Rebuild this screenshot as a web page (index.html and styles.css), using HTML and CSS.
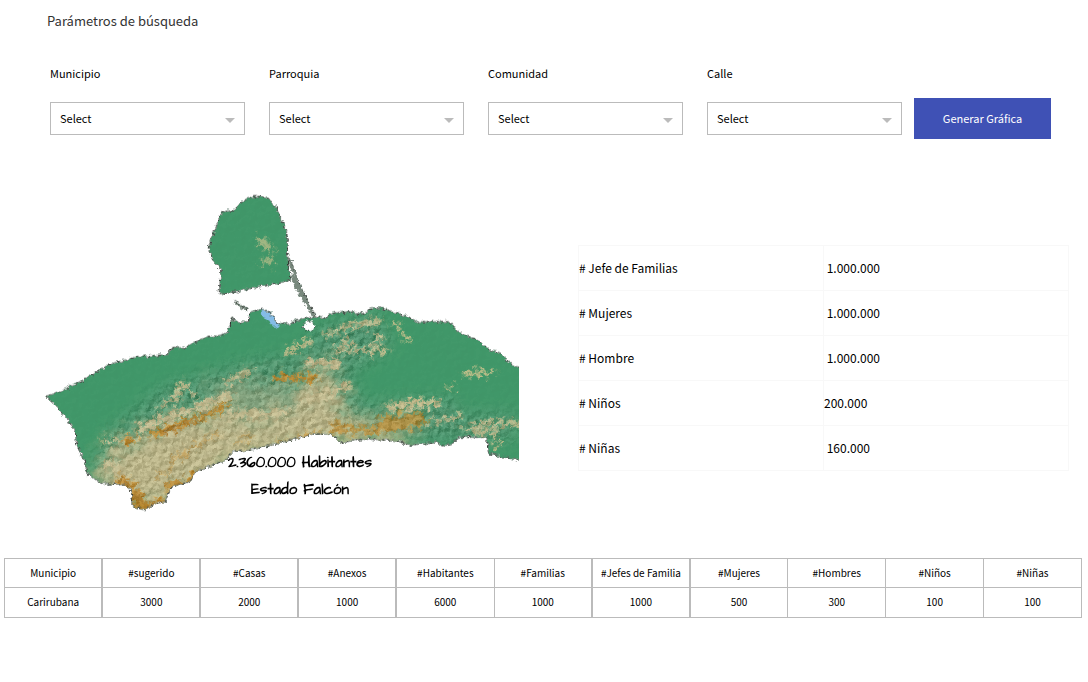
FILE: index.html
```html
<!DOCTYPE html>
<html lang="es">
<head>
<meta charset="utf-8">
<meta name="viewport" content="width=device-width, initial-scale=1">
<title>Parámetros de búsqueda</title>
<link rel="stylesheet" href="styles.css">
</head>
<body>
<main class="page">
  <h1 class="title">Parámetros de búsqueda</h1>

  <form class="filters">
    <div class="field">
      <label for="municipio">Municipio</label>
      <div class="select-box">
        <select id="municipio"><option>Select</option></select>
        <svg class="caret" viewBox="0 0 10 5" aria-hidden="true"><path d="M0 0h10L5 5z"/></svg>
      </div>
    </div>
    <div class="field">
      <label for="parroquia">Parroquia</label>
      <div class="select-box">
        <select id="parroquia"><option>Select</option></select>
        <svg class="caret" viewBox="0 0 10 5" aria-hidden="true"><path d="M0 0h10L5 5z"/></svg>
      </div>
    </div>
    <div class="field">
      <label for="comunidad">Comunidad</label>
      <div class="select-box">
        <select id="comunidad"><option>Select</option></select>
        <svg class="caret" viewBox="0 0 10 5" aria-hidden="true"><path d="M0 0h10L5 5z"/></svg>
      </div>
    </div>
    <div class="field">
      <label for="calle">Calle</label>
      <div class="select-box">
        <select id="calle"><option>Select</option></select>
        <svg class="caret" viewBox="0 0 10 5" aria-hidden="true"><path d="M0 0h10L5 5z"/></svg>
      </div>
    </div>
    <button class="submit" type="button">Generar Gráfica</button>
  </form>

  <section class="overview">
    <figure class="map">
      <svg class="map-drawing" viewBox="42 42 1425 954" role="img" aria-label="Mapa del Estado Falcón">
        <defs>
          <path id="mainland" d="M48 650L100 630 160 600 205 572 250 550 320 530 410 525 425 503 460 503 490 490 530 470 560 468 585 462 600 440 605 412 625 428 655 425 660 395 700 388 725 402 740 428 770 434 800 422 830 415 855 410 890 415 900 400 960 395 1000 402 1020 388 1042 382 1080 392 1130 408 1160 425 1255 425 1275 445 1300 465 1350 482 1380 512 1410 518 1440 550 1467 562 1500 562V845L1440 835 1375 820 1370 772 1290 772 1260 795 1235 797 1225 788 1140 795 1090 780 1000 778 930 788 905 763 850 762 800 775 720 797 640 815 610 812 585 842 500 875 480 905 425 920 405 965 375 970 345 990 310 980 305 945 300 925 285 915 215 910 175 885 165 850 140 795 135 750 105 710 70 670Z"/>
          <path id="peninsula" d="M575 95L610 92 640 62 675 47 715 55 738 80 750 110 770 150 773 220 780 300 740 312 700 318 640 330 590 343 567 340 570 310 573 270 565 260 545 235 535 205 550 160 565 125Z"/>
          <clipPath id="land"><use href="#mainland"/><use href="#peninsula"/></clipPath>
          <filter id="coast" x="-2%" y="-2%" width="104%" height="104%">
            <feTurbulence type="fractalNoise" baseFrequency=".08" numOctaves="3" seed="4" result="n"/>
            <feDisplacementMap in="SourceGraphic" in2="n" scale="16" xChannelSelector="R" yChannelSelector="G"/>
          </filter>
          <filter id="haze" x="-20%" y="-20%" width="140%" height="140%" color-interpolation-filters="sRGB">
            <feGaussianBlur stdDeviation="28" result="b"/>
            <feTurbulence type="fractalNoise" baseFrequency=".02 .03" numOctaves="4" seed="9" result="n"/>
            <feDisplacementMap in="b" in2="n" scale="90" xChannelSelector="R" yChannelSelector="G"/>
          </filter>
          <filter id="ridge" filterUnits="userSpaceOnUse" x="0" y="0" width="1500" height="1020" color-interpolation-filters="sRGB">
            <feGaussianBlur stdDeviation="5" result="b"/>
            <feTurbulence type="fractalNoise" baseFrequency=".06" numOctaves="3" seed="6" result="n"/>
            <feDisplacementMap in="b" in2="n" scale="55" xChannelSelector="R" yChannelSelector="G"/>
          </filter>
          <filter id="relief" x="0" y="0" width="100%" height="100%" color-interpolation-filters="sRGB">
            <feTurbulence type="fractalNoise" baseFrequency=".05 .06" numOctaves="4" seed="12" result="n"/>
            <feColorMatrix in="n" type="matrix" values="0 0 0 0 0  0 0 0 0 0  0 0 0 0 0  1 0 0 0 0" result="h"/>
            <feDiffuseLighting in="h" surfaceScale="8" diffuseConstant="1" lighting-color="#fff">
              <feDistantLight azimuth="225" elevation="34"/>
            </feDiffuseLighting>
          </filter>
          <filter id="soft"><feGaussianBlur stdDeviation="22"/></filter>
          <mask id="highlands" maskUnits="userSpaceOnUse" x="0" y="0" width="1500" height="1020">
            <rect width="1500" height="1020" fill="#111"/>
            <path filter="url(#soft)" fill="#fff" d="M180 890L230 760 400 620 640 550 800 520 870 440 1040 390 1090 500 960 580 1000 670 1270 650 1290 700 1460 700V780H900L600 830 400 980H290Z"/>
          </mask>
        </defs>

        <g filter="url(#coast)" color-interpolation-filters="sRGB">
          <g clip-path="url(#land)">
            <rect width="1500" height="1020" fill="#419869"/>
            <g filter="url(#haze)">
              <path fill="#c8c08a" d="M190 920L235 800 360 750 430 710 560 690 690 720 790 650 860 550 910 560 930 640 950 720 1080 720 1170 710 1150 750 1060 790 880 800 650 840 480 930 360 1010 290 960Z"/>
              <path fill="#8fae80" opacity=".85" d="M540 610L700 600 830 620 820 680 690 700 540 690Z"/>
            </g>
            <g filter="url(#ridge)" fill="none" stroke="#cfc48e" stroke-linecap="round">
              <path stroke-width="14" d="M225 785L320 775M430 645L460 615 485 640M390 680L440 650M590 605L660 575M770 515L840 485M890 460L960 440 1050 425M910 512L1070 510M930 495L960 480M1030 490L1050 470M1095 440h10M1125 475h8M1310 582L1385 575M1256 622h8M1200 725L1290 710M1310 745L1390 725 1470 730M1330 755h70M1400 792h8"/>
              <path stroke-width="24" d="M840 550L920 550M830 660L950 620M1080 680L1150 670 1220 670M510 680L600 645M240 850L280 880M600 705L770 700M330 745L480 690"/>
              <path stroke-width="20" opacity=".7" d="M690 182L722 205M705 244h20"/>
            </g>
            <g filter="url(#ridge)" fill="none" stroke="#cb8b1e" stroke-linecap="round">
              <path stroke-width="18" d="M375 762L540 700M740 594L850 592M560 690L595 670M285 782L310 780"/>
              <path stroke-width="9" opacity=".6" d="M420 845L480 810 570 760M380 890L420 870M620 785L660 765M460 830L500 790M720 800L760 785"/>
              <path stroke-width="22" opacity=".75" d="M910 740L960 745 1030 750 1100 740 1180 725M790 788L860 765M1050 725L1170 705"/>
              <path stroke-width="34" opacity=".9" d="M310 940L345 985 395 975M275 905L300 920M485 900L495 892M425 925L445 920"/>
            </g>
            <g filter="url(#ridge)" fill="none" stroke="#8d5a12" stroke-linecap="round" opacity=".6">
              <path stroke-width="8" d="M320 950L335 975M345 985L375 970M275 905L285 912M400 760L440 742M470 732L500 718"/>
            </g>
            <g mask="url(#highlands)"><rect class="shade" width="1500" height="1020" filter="url(#relief)"/></g>
            <path fill="#84bce6" d="M686 370L725 380 758 425 740 446 714 422 696 410Z"/>
          </g>
          <g fill="none" stroke="#78887d" stroke-width="9">
            <path d="M777 235L800 300 830 365 857 412M784 285L804 330 850 405"/>
            <path d="M614 363L635 382 655 390M605 412L612 428"/>
            <path d="M412 525L425 505 440 503" stroke-width="5"/>
          </g>
          <circle cx="838" cy="438" r="16" fill="#fff"/>
          <g fill="none">
            <g stroke="#8b918c" stroke-width="3"><use href="#mainland"/><use href="#peninsula"/></g>
            <g stroke="#272b28" stroke-width="3" stroke-dasharray="6 8 3 10 8 7"><use href="#mainland"/><use href="#peninsula"/><circle cx="838" cy="438" r="16"/><path d="M781 240L804 300 834 365 857 408M614 363L635 382 655 390"/></g>
          </g>
        </g>
      </svg>
      <figcaption class="map-caption">
        <span>2.360.000 Habitantes</span>
        <span>Estado Falcón</span>
      </figcaption>
    </figure>

    <table class="totals">
      <tbody>
        <tr><th scope="row"># Jefe de Familias</th><td>&nbsp;1.000.000</td></tr>
        <tr><th scope="row"># Mujeres</th><td>&nbsp;1.000.000</td></tr>
        <tr><th scope="row"># Hombre</th><td>&nbsp;1.000.000</td></tr>
        <tr><th scope="row"># Niños</th><td>200.000</td></tr>
        <tr><th scope="row"># Niñas</th><td>&nbsp;160.000</td></tr>
      </tbody>
    </table>
  </section>

  <table class="summary">
    <thead>
      <tr>
        <th class="wide-rule">Municipio</th><th class="wide-rule">#sugerido</th><th class="wide-rule">#Casas</th><th class="wide-rule">#Anexos</th><th>#Habitantes</th><th class="wide-rule">#Familias</th><th class="wide-rule">#Jefes de Familia</th><th>#Mujeres</th><th>#Hombres</th><th>#Niños</th><th>#Niñas</th>
      </tr>
    </thead>
    <tbody>
      <tr>
        <td class="wide-rule">Carirubana</td><td class="wide-rule">3000</td><td class="wide-rule">2000</td><td class="wide-rule">1000</td><td>6000</td><td class="wide-rule">1000</td><td class="wide-rule">1000</td><td>500</td><td>300</td><td>100</td><td>100</td>
      </tr>
    </tbody>
  </table>
</main>
</body>
</html>
```
FILE: styles.css
```css
* { box-sizing: border-box; }

body {
  margin: 0;
  background: #fff;
  color: #000;
  font-family: "Noto Sans CJK SC", "Noto Sans", sans-serif;
  font-size: 11px;
}

.title {
  margin: 0;
  padding: 11px 47px 0;
  font-size: 13px;
  line-height: 20px;
  font-weight: 400;
  color: #333;
}

.filters {
  display: grid;
  grid-template-columns: repeat(4, 195fr) 125fr;
  column-gap: 24px;
  align-items: end;
  padding: 32px 37px 0 50px;
}

.field {
  display: flex;
  flex-direction: column;
  gap: 19px;
  min-width: 0;
  margin-bottom: 4px;
}

.field label { line-height: 20px; }

.select-box {
  display: grid;
  align-items: center;
}

.select-box > * { grid-area: 1 / 1; }

.select-box select {
  width: 100%;
  height: 33px;
  padding: 0 24px 2px 9px;
  border: 1px solid #bbb;
  border-radius: 0;
  background: #fff;
  color: #000;
  font: inherit;
  appearance: none;
}

.caret {
  justify-self: end;
  width: 10px;
  height: 5px;
  margin: 4px 10px 0 0;
  fill: #bbb;
  pointer-events: none;
}

.submit {
  height: 41px;
  margin-left: -12px;
  padding: 0 0 2px;
  border: 0;
  background: #3f51b5;
  color: #fff;
  font: inherit;
}

.overview {
  display: grid;
  grid-template-columns: 475fr 491fr;
  column-gap: 59px;
  align-items: start;
  padding: 55px 19px 0 44px;
}

.map {
  position: relative;
  margin: 0;
}

.map-drawing {
  display: block;
  width: 100%;
}

.shade {
  mix-blend-mode: soft-light;
  opacity: .22;
}

.map-caption {
  position: absolute;
  left: 0;
  right: 0;
  bottom: 9px;
  display: flex;
  flex-direction: column;
  align-items: center;
  padding-left: 37px;
  font-family: "Architects Daughter", Lato, sans-serif;
  font-size: 15px;
  line-height: 27px;
  font-weight: 700;
}

.totals {
  width: 100%;
  margin-top: 51px;
  border-collapse: collapse;
  table-layout: fixed;
  font-size: 12px;
}

.totals th,
.totals td {
  height: 45px;
  padding: 0 0 2px;
  border: 1px solid #f8f8f8;
  font-weight: 400;
  text-align: left;
}

.summary {
  width: calc(100% - 10px);
  margin: 46px 6px 0 4px;
  border-collapse: collapse;
  table-layout: fixed;
  font-size: 10px;
}

.summary th,
.summary td {
  height: 29px;
  padding: 0 0 2px;
  border: 1px solid #bbb;
  font-weight: 400;
  text-align: center;
  white-space: nowrap;
}

.summary td { height: 30px; }

.summary .wide-rule { border-right-width: 2px; }
```
